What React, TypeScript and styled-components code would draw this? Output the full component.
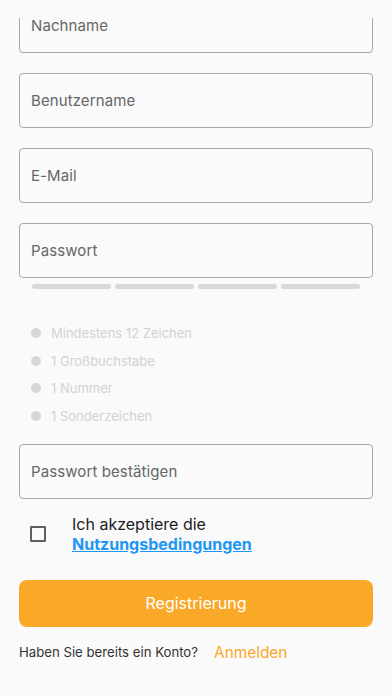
import React from "react";
import styled, { createGlobalStyle } from "styled-components";

const Global = createGlobalStyle`
  html, body { margin: 0; padding: 0; background: #fafafa; }
  body { font-family: Inter, "Noto Sans", sans-serif; -webkit-font-smoothing: antialiased; }
  * { box-sizing: border-box; }
`;

const Screen = styled.div`
  position: relative;
  width: 392px;
  height: 696px;
  overflow: hidden;
  background: #fafafa;
`;

const TopCover = styled.div`
  position: absolute;
  top: 0;
  left: 0;
  right: 0;
  height: 18px;
  background: #fafafa;
  z-index: 2;
`;

const Form = styled.div`
  display: flex;
  flex-direction: column;
  padding: 0 19px;
  margin-top: -2px;
`;

const Field = styled.div<{ $mt?: number }>`
  height: 55px;
  border: 1px solid #a9a9a9;
  border-radius: 4px;
  display: flex;
  align-items: center;
  padding: 0 11px;
  margin-top: ${(p) => p.$mt ?? 0}px;
  font-size: 15px;
  color: #666;
  letter-spacing: 0.1px;
`;

const Strength = styled.div`
  display: grid;
  grid-template-columns: repeat(4, 1fr);
  gap: 4px;
  margin: 6px 13px 0 13px;
`;

const Bar = styled.div`
  height: 5px;
  border-radius: 3px;
  background: #d9d9d9;
`;

const Rules = styled.ul`
  list-style: none;
  margin: 34px 0 0 0;
  padding: 0 0 0 12px;
  display: flex;
  flex-direction: column;
  gap: 8px;
`;

const Rule = styled.li`
  display: flex;
  align-items: center;
  height: 19.7px;
  font-size: 13px;
  color: #d2d2d2;
`;

const Dot = styled.span`
  width: 10px;
  height: 10px;
  border-radius: 50%;
  background: #d6d6d6;
  margin-right: 10px;
`;

const TermsRow = styled.div`
  display: flex;
  align-items: center;
  margin-top: 15px;
  padding-left: 11px;
`;

const Checkbox = styled.span`
  width: 16px;
  height: 16px;
  border: 2px solid #5f5f5f;
  border-radius: 1px;
  flex: none;
`;

const TermsText = styled.div`
  margin-left: 26px;
  font-size: 16px;
  line-height: 20px;
  color: #222;
`;

const Link = styled.a`
  display: block;
  color: #2196f3;
  font-weight: 700;
  text-decoration: underline;
`;

const Button = styled.button`
  margin-top: 26px;
  height: 47px;
  border: none;
  border-radius: 8px;
  background: #f9a828;
  color: #fff;
  font-family: inherit;
  font-size: 16px;
`;

const Footer = styled.div`
  display: flex;
  align-items: center;
  margin-top: 16px;
`;

const Question = styled.span`
  font-size: 13.2px;
  color: #333;
`;

const SignIn = styled.span`
  margin-left: 16px;
  font-size: 15.4px;
  color: #f9a828;
`;

export default function App() {
  return (
    <Screen>
      <Global />
      <TopCover />
      <Form>
        <Field>Nachname</Field>
        <Field $mt={20}>Benutzername</Field>
        <Field $mt={20}>E-Mail</Field>
        <Field $mt={20}>Passwort</Field>
        <Strength>
          <Bar />
          <Bar />
          <Bar />
          <Bar />
        </Strength>
        <Rules>
          <Rule><Dot />Mindestens 12 Zeichen</Rule>
          <Rule><Dot />1 Großbuchstabe</Rule>
          <Rule><Dot />1 Nummer</Rule>
          <Rule><Dot />1 Sonderzeichen</Rule>
        </Rules>
        <Field $mt={18}>Passwort bestätigen</Field>
        <TermsRow>
          <Checkbox />
          <TermsText>
            Ich akzeptiere die
            <Link>Nutzungsbedingungen</Link>
          </TermsText>
        </TermsRow>
        <Button>Registrierung</Button>
        <Footer>
          <Question>Haben Sie bereits ein Konto?</Question>
          <SignIn>Anmelden</SignIn>
        </Footer>
      </Form>
    </Screen>
  );
}
